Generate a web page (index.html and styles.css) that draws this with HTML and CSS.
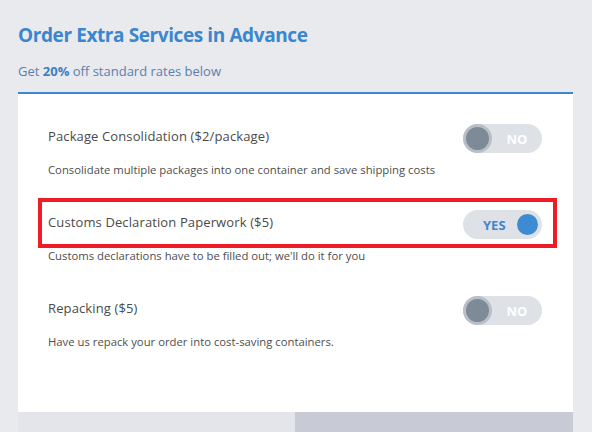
FILE: index.html
```html
<!DOCTYPE html>
<html>
<head>
<meta charset="utf-8">
<link rel="stylesheet" href="styles.css">
</head>
<body>
<div class="page">
  <h1 class="title">Order Extra Services in Advance</h1>
  <p class="subtitle">Get <b>20%</b> off standard rates below</p>
  <div class="card">
    <div class="items">
      <div class="item">
        <div class="item-head">
          <span class="item-name">Package Consolidation ($2/package)</span>
          <span class="toggle off"><span class="knob"></span><span class="label">NO</span></span>
        </div>
        <p class="item-desc">Consolidate multiple packages into one container and save shipping costs</p>
      </div>
      <div class="item">
        <div class="item-head highlighted">
          <span class="item-name">Customs Declaration Paperwork ($5)</span>
          <span class="toggle on"><span class="label">YES</span><span class="knob"></span></span>
          <span class="highlight-box"></span>
        </div>
        <p class="item-desc">Customs declarations have to be filled out; we'll do it for you</p>
      </div>
      <div class="item">
        <div class="item-head">
          <span class="item-name">Repacking ($5)</span>
          <span class="toggle off"><span class="knob"></span><span class="label">NO</span></span>
        </div>
        <p class="item-desc">Have us repack your order into cost-saving containers.</p>
      </div>
    </div>
    <div class="card-footer">
      <div class="foot-left"></div>
      <div class="foot-right"></div>
    </div>
  </div>
</div>
</body>
</html>
```

FILE: styles.css
```css
html, body {
  margin: 0;
  padding: 0;
  background: #e9eaee;
  font-family: "Open Sans", "Liberation Sans", sans-serif;
}
.page {
  padding: 0 19px 0 18px;
}
.title {
  margin: 0;
  padding-top: 24px;
  font-size: 19px;
  line-height: 22px;
  font-weight: 700;
  letter-spacing: -0.4px;
  color: #3a86cf;
}
.subtitle {
  margin: 0;
  padding-top: 17px;
  font-size: 13px;
  line-height: 16px;
  color: #5b7fae;
}
.subtitle b {
  color: #3b7fc4;
  font-weight: 700;
}
.card {
  margin-top: 13px;
  background: #fff;
  border-top: 2px solid #3b88d0;
}
.items {
  padding: 30px 31px 62px 30px;
  display: flex;
  flex-direction: column;
  gap: 32px;
}
.item-head {
  position: relative;
  display: flex;
  justify-content: space-between;
  align-items: center;
  height: 29px;
}
.item-name {
  font-size: 13px;
  letter-spacing: 0.12px;
  color: #4a4a4a;
  margin-top: -6px;
}
.item-desc {
  margin: 9px 0 0;
  font-size: 11.3px;
  line-height: 16px;
  color: #4e4e4e;
}
.toggle {
  width: 79px;
  height: 29px;
  border-radius: 15px;
  background: #dee1e5;
  display: flex;
  align-items: center;
  box-sizing: border-box;
  font-weight: 700;
  font-size: 13px;
}
.toggle.off .knob {
  width: 29px;
  height: 29px;
  box-sizing: border-box;
  border-radius: 50%;
  background: #7e8a98;
  border: 3px solid #b9bfc6;
}
.toggle.off .label {
  flex: 1;
  text-align: center;
  color: #fff;
}
.toggle.on {
  padding: 0 4px 0 20px;
}
.toggle.on .label {
  flex: 1;
  color: #3d87cf;
}
.toggle.on .knob {
  width: 21px;
  height: 21px;
  border-radius: 50%;
  background: #3d8bd3;
}
.highlight-box {
  position: absolute;
  left: -10px;
  right: -15px;
  top: -12px;
  bottom: -9px;
  border: 4px solid #ee1c24;
  pointer-events: none;
}
.card-footer {
  display: flex;
  height: 30px;
}
.foot-left {
  width: 277px;
  background: #e4e5ea;
}
.foot-right {
  flex: 1;
  background: #c8cad6;
}
```
